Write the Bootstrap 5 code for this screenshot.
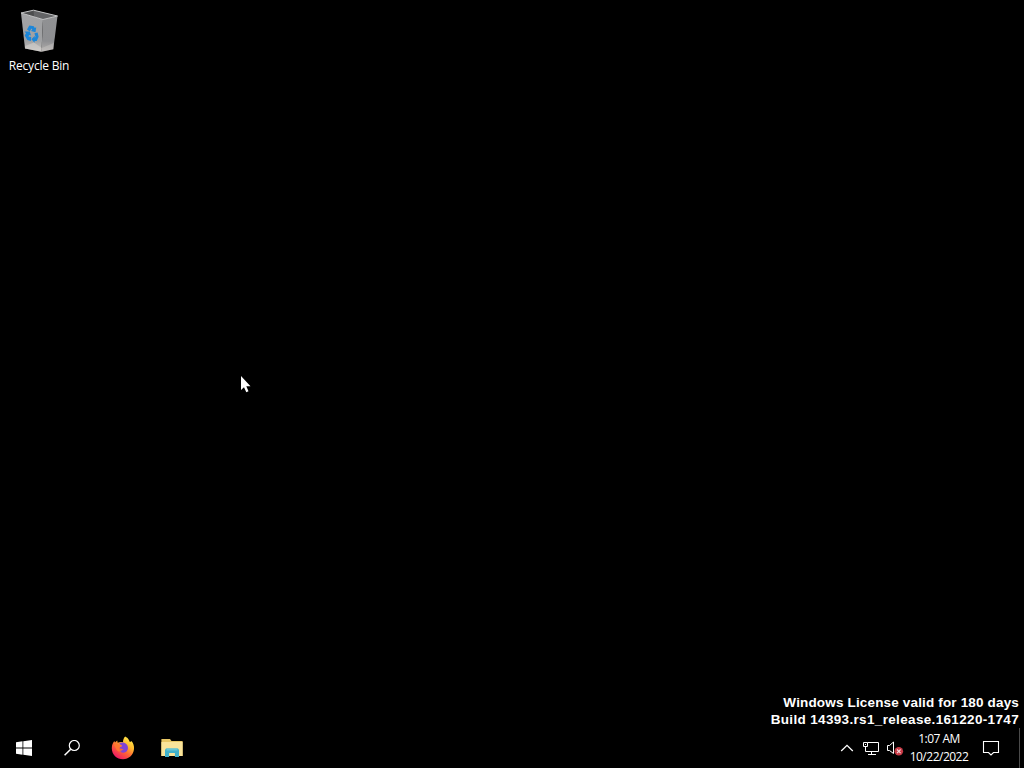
<!DOCTYPE html>
<html lang="en">
  <head>
    <meta charset="utf-8" />
    <meta name="viewport" content="width=device-width, initial-scale=1" />
    <title>Desktop</title>
    <!-- Bootstrap 5 CSS -->
    <link
      rel="stylesheet"
      href="https://cdn.jsdelivr.net/npm/bootstrap@5.3.0/dist/css/bootstrap.min.css"
    />
    <style>
      body {
        background-color: #000;
        color: #fff;
        font-family: "Open Sans", "Noto Sans", sans-serif;
        font-size: 12px;
        line-height: 16px;
      }
      svg {
        display: block;
        flex: none;
      }
      .desktop-icon {
        width: 78px;
        padding-top: 7px;
      }
      .icon-label {
        letter-spacing: -0.22px;
        margin-top: 3px;
        white-space: nowrap;
      }
      .build-info {
        font-family: "Liberation Sans", Arial, sans-serif;
        font-size: 13.5px;
        font-weight: 700;
        line-height: 17px;
        padding-right: 5px;
        white-space: nowrap;
      }
      .build-line1 { letter-spacing: 0.16px; }
      .build-line2 { letter-spacing: 0.34px; }
      .pointer {
        left: 240px;
        top: 375px;
      }
      .taskbar {
        height: 40px;
      }
      .task-btn {
        width: 48px;
        height: 40px;
        padding: 0;
        border-radius: 0;
      }
      .task-app {
        width: 49px;
      }
      .tray-btn {
        width: 24px;
        height: 40px;
        padding: 0;
        border-radius: 0;
      }
      .clock {
        width: 64px;
        line-height: 18px;
        letter-spacing: -0.5px;
      }
      .show-desktop {
        width: 5px;
        height: 40px;
        border-left: 1px solid #4a4a4a;
      }
    </style>
  </head>
  <body class="d-flex flex-column vh-100 overflow-hidden">
    <main class="flex-grow-1 d-flex flex-column justify-content-between position-relative">
      <!-- Recycle Bin -->
      <div class="desktop-icon d-flex flex-column align-items-center text-center">
        <svg width="48" height="48" viewBox="15 7 48 48">
          <defs>
            <linearGradient id="binFront" x1="0" y1="0" x2="0" y2="1">
              <stop offset="0" stop-color="#a2a3a5" />
              <stop offset="0.72" stop-color="#a0a1a3" />
              <stop offset="1" stop-color="#c9c6c4" />
            </linearGradient>
            <linearGradient id="binSide" x1="0" y1="0" x2="0" y2="1">
              <stop offset="0" stop-color="#909193" />
              <stop offset="0.7" stop-color="#8e8f92" />
              <stop offset="1" stop-color="#b5b1af" />
            </linearGradient>
          </defs>
          <path d="M21 13 L43 19.3 L41.5 51.8 L25 48.6z" fill="url(#binFront)" />
          <path d="M43 19.3 L57.5 16 L53.3 49.2 L41.5 51.8z" fill="url(#binSide)" />
          <path d="M21 13 L33.5 10.2 L57.5 16 L43 19.5z" fill="#4c4d4e" />
          <path d="M33.5 10.2 L57.5 16 L43 19.5 L34 16.5z" fill="#626365" />
          <path d="M21 13 L33.5 10.2 L57.5 16 L43 19.5z" fill="none" stroke="#c2c3c4" stroke-width="1" />
          <path d="M25.3 46 L34 42.5 L41.8 48 L41.5 51.8 L25 48.6z" fill="#d5d1ce" opacity="0.55" />
          <path d="M41.8 48 L53.7 43 L53.3 49.2 L41.5 51.8z" fill="#d5d1ce" opacity="0.35" />
          <g fill="#1c86d8">
            <path d="M27 29.5 L29.3 25.6 L33.8 26.3 L34.8 28 L36.2 27.2 L35.5 32.2 L31 30.9 L32.3 29.5 L31.3 28.5 L29.8 31.4z" />
            <path d="M24.5 31.4 L29.8 31.6 L31 35.6 L29.3 35 L28.4 36.4 L31.2 37 L30.9 41 L27.3 40 L24.7 35.4 L26 33.2z" />
            <path d="M34.4 33.2 L37.6 32.5 L38.6 36.7 L36.7 41 L34.7 41.1 L34.5 42.7 L31.4 39.2 L34.8 35.8 L34.6 37.5 L35.6 37z" />
          </g>
        </svg>
        <span class="icon-label">Recycle Bin</span>
      </div>

      <!-- Build watermark -->
      <div class="build-info text-end">
        <div class="build-line1">Windows License valid for 180 days</div>
        <div class="build-line2">Build 14393.rs1_release.161220-1747</div>
      </div>

      <!-- Mouse pointer -->
      <svg class="pointer position-absolute" width="12" height="19" viewBox="0 0 12 19">
        <path d="M1 1 V15 L4 12.2 L6.3 17.2 L8.5 16.2 L6.3 11.3 H10.5z" fill="#fff" />
      </svg>
    </main>

    <footer class="taskbar d-flex justify-content-between align-items-center">
      <div class="d-flex">
        <button class="btn task-btn d-flex align-items-center justify-content-center" type="button" aria-label="Start">
          <svg width="16" height="16" viewBox="0 0 16 16" fill="#fff">
            <path d="M0 2.2 L6.5 1.3 V7.5 H0z M7.3 1.2 L16 0 V7.5 H7.3z M0 8.4 H6.5 V14.7 L0 13.8z M7.3 8.4 H16 V16 L7.3 14.8z" />
          </svg>
        </button>
        <button class="btn task-btn d-flex align-items-center justify-content-center" type="button" aria-label="Search">
          <svg width="16" height="16" viewBox="0 0 16 16" fill="none" stroke="#fff">
            <circle cx="10.3" cy="5.5" r="5" stroke-width="1.2" />
            <path d="M6.7 9.2 L0.6 15.3" stroke-width="1.5" />
          </svg>
        </button>
        <button class="btn task-btn task-app d-flex ms-0 align-items-center justify-content-center" type="button" aria-label="Firefox">
          <svg class="ms-1" width="24" height="24" viewBox="0 0 24 24">
            <defs>
              <linearGradient id="foxBody" x1="0.85" y1="0.05" x2="0.25" y2="0.95">
                <stop offset="0" stop-color="#fff04a" />
                <stop offset="0.35" stop-color="#ffb52e" />
                <stop offset="0.62" stop-color="#ff6534" />
                <stop offset="1" stop-color="#ee1965" />
              </linearGradient>
            </defs>
            <path d="M14.2 0.6 C17.5 2.2 18.1 4.5 18.7 5.8 C19.8 6.1 20.3 5.4 20.5 5 C22.4 7.2 23.3 10 23 13 C22.4 19.2 17.6 23.2 12 23.2 C5.7 23.2 0.8 18.7 0.8 12.2 C0.8 9 1.9 6.6 3.3 4.9 L4 6.5 L6.2 4.5 L6.7 6.7 C8.2 6 10.6 6 12 6.3 C12 3.8 12.8 1.9 14.2 0.6z" fill="url(#foxBody)" />
            <path d="M8.2 7.6 C10 6.2 13.5 6.2 15.5 8.2 C17.8 10.5 17.4 15 14.2 16.3 C11.7 17.3 8.8 16 8.2 13.7 C10 14.7 11.5 14.2 12.7 13.1 C11.1 12.8 9.4 13 8.5 12 C8.8 10.9 10.3 10.7 11.1 10.1 C10.5 9.1 9 8.8 8.2 7.6z" fill="#8143d6" />
            <path d="M3 9 C5 6.8 7.5 8.2 9.5 9.1 L11.1 10.1 C9.7 10.7 8.8 11 8.2 12 C8 14 10 14.9 11.5 14.1 C9.8 16.8 5.8 15.7 4.9 12.4z" fill="#ff7a30" opacity="0.85" />
          </svg>
        </button>
        <button class="btn task-btn task-app d-flex align-items-center justify-content-center" type="button" aria-label="File Explorer">
          <svg class="ms-1" width="22" height="20" viewBox="0 0 22 20">
            <path d="M0.4 1 H9 L10.5 3 H21.6 V18 H0.4z" fill="#e9c765" />
            <path d="M0.4 4 H21.6 V18 H0.4z" fill="#fae49a" />
            <path d="M5 10.5 H17 L18 12 V19 H13.9 V15 H8.1 V19 H4 V12z" fill="#41b2cb" />
            <path d="M5.5 10.5 H16.5 V12.5 H5.5z" fill="#68c6d4" />
          </svg>
        </button>
      </div>

      <!-- System tray -->
      <div class="d-flex align-items-center">
        <button class="btn tray-btn d-flex align-items-center justify-content-center" type="button" aria-label="Show hidden icons">
          <svg width="14" height="8" viewBox="0 0 14 8" fill="none" stroke="#fff" stroke-width="1.3">
            <path d="M1.2 7 L7 1.3 L12.8 7" />
          </svg>
        </button>
        <button class="btn tray-btn d-flex align-items-center justify-content-center" type="button" aria-label="Network">
          <svg width="18" height="16" viewBox="0 0 18 16" fill="none" stroke="#fff">
            <path d="M5.5 2.5 H16.5 V11.5 H3.5 V6.5 M9.5 11.5 V14.5 M6 14.5 H14 M1.5 2.5 H5.5 V6.5 H1.5z M3 4.5 H4" />
          </svg>
        </button>
        <button class="btn tray-btn d-flex align-items-center justify-content-center" type="button" aria-label="Volume muted">
          <svg width="18" height="18" viewBox="0 0 18 18">
            <path d="M1.5 6.5 H3.5 L7.5 3 V14.5 L3.5 11.5 H1.5z" fill="none" stroke="#fff" />
            <circle cx="12.8" cy="12.3" r="4.3" fill="#c93b47" />
            <path d="M11 10.5 L14.6 14.1 M14.6 10.5 L11 14.1" stroke="#f5d5d8" stroke-width="1.1" />
          </svg>
        </button>
        <div class="clock text-center">
          <div>1:07 AM</div>
          <div>10/22/2022</div>
        </div>
        <button class="btn task-btn d-flex align-items-center justify-content-center" type="button" aria-label="Action center">
          <svg class="me-2" width="18" height="18" viewBox="0 0 18 18" fill="none" stroke="#fff" stroke-width="1.1">
            <path d="M1.5 2.5 H16.5 V13.5 H11.5 L9 16 L6.5 13.5 H1.5z" />
          </svg>
        </button>
        <div class="show-desktop"></div>
      </div>
    </footer>

    <!-- Bootstrap 5 JS -->
    <script
      src="https://cdn.jsdelivr.net/npm/bootstrap@5.3.0/dist/js/bootstrap.bundle.min.js"
    ></script>
  </body>
</html>
